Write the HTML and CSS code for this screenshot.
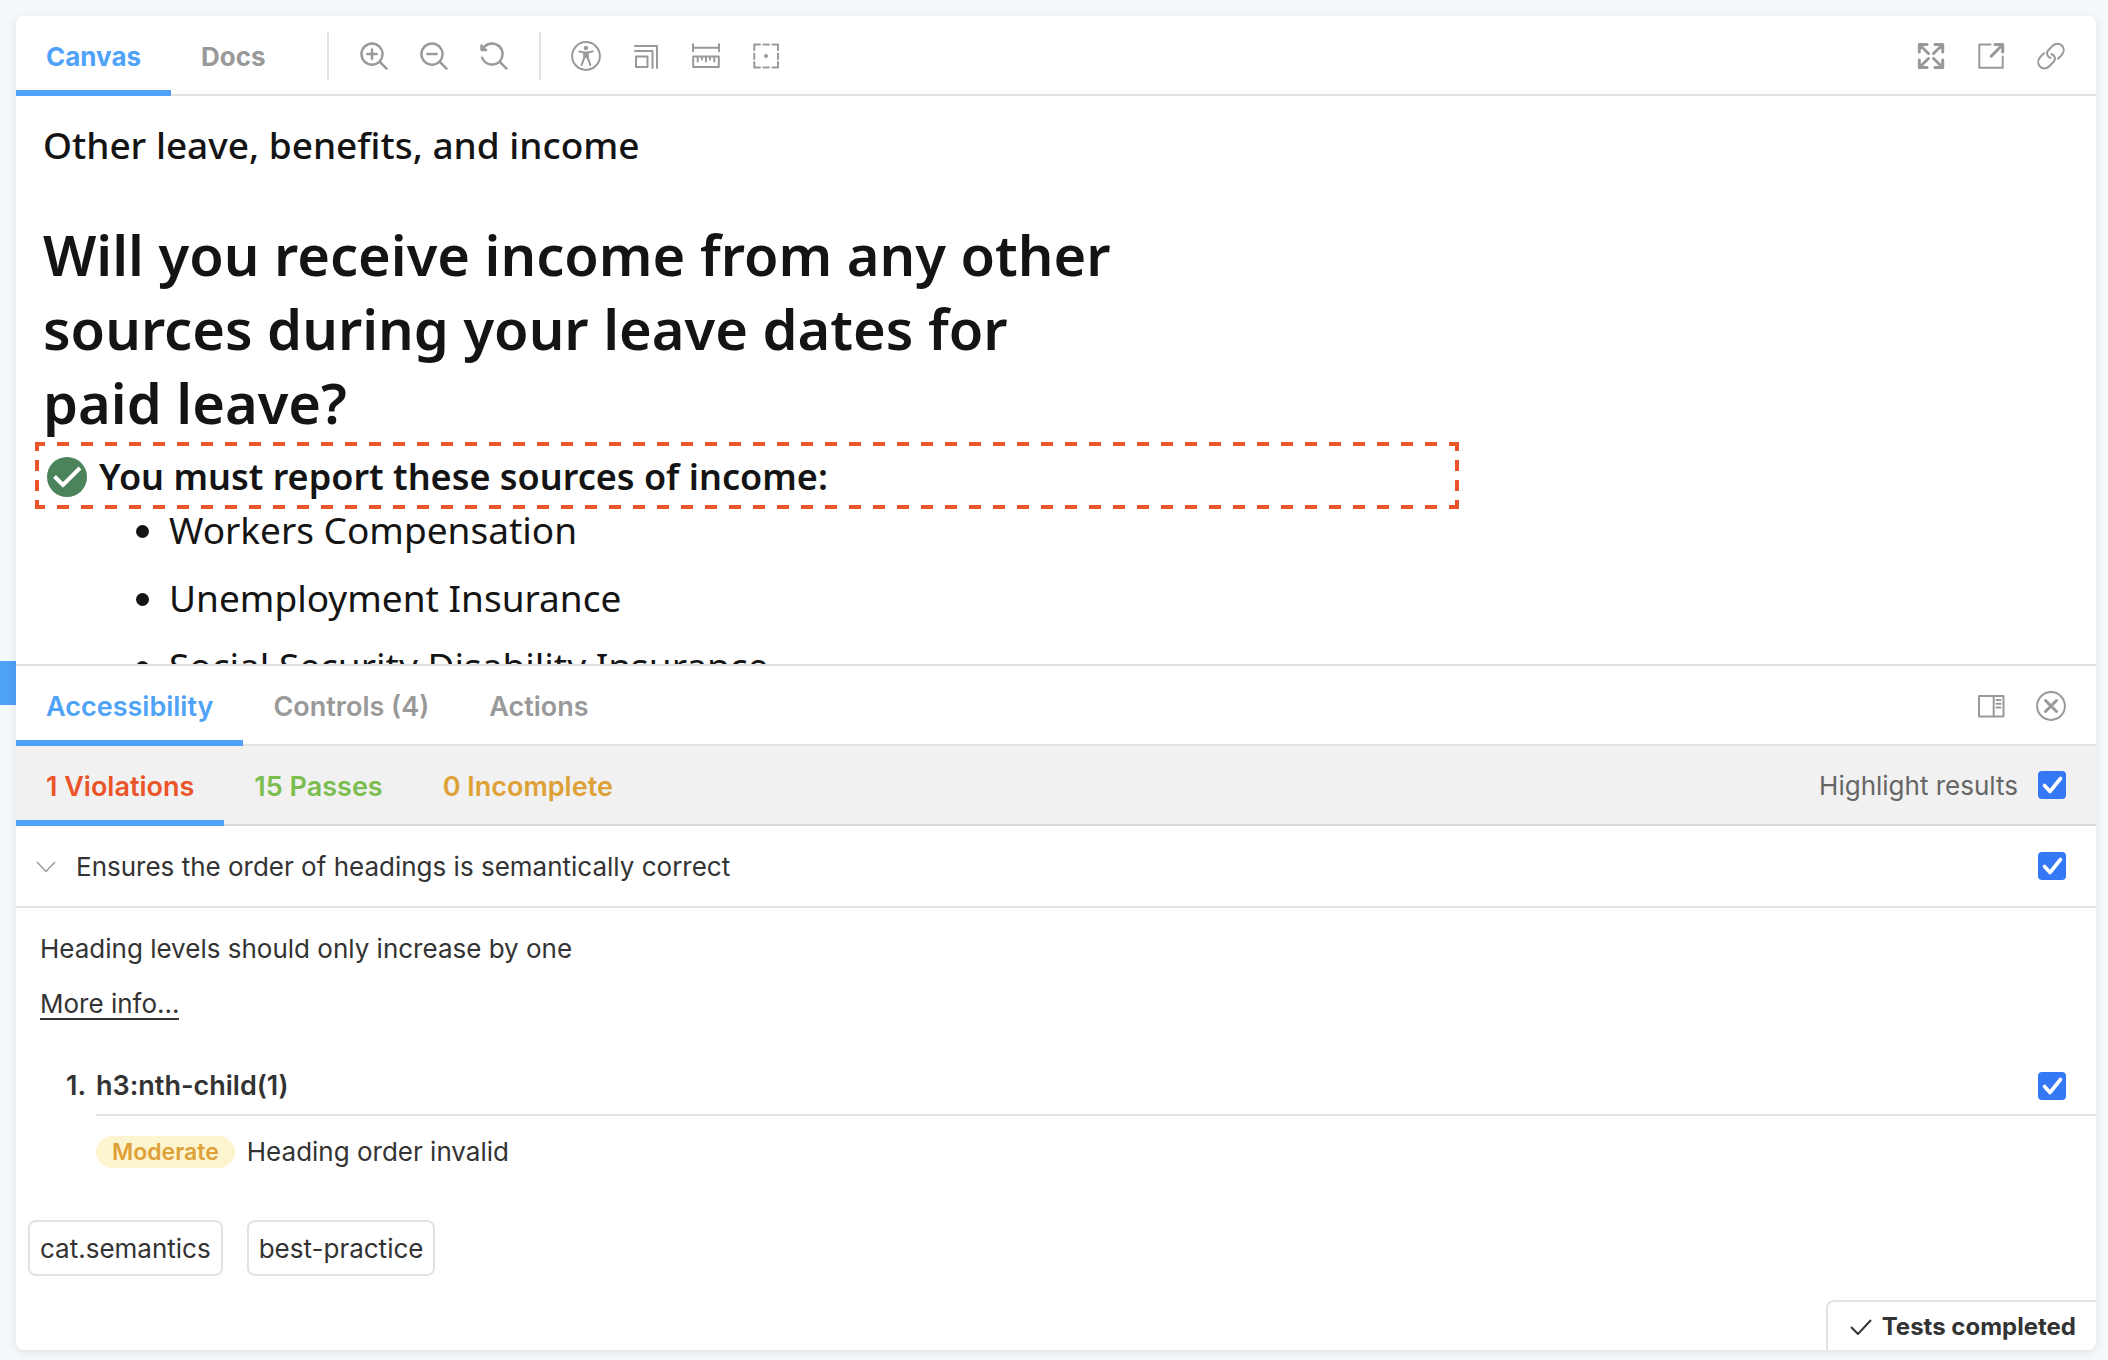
FILE: index.html
```html
<!DOCTYPE html>
<html lang="en">
<head>
<meta charset="utf-8">
<meta name="viewport" content="width=device-width, initial-scale=1">
<title>Storybook</title>
<link rel="stylesheet" href="styles.css">
</head>
<body>
<aside class="sidebar"><div class="sidebar-selected"></div></aside>
<main class="card">
  <header class="bar">
    <nav class="tabs">
      <button class="tab tab-active" type="button">Canvas</button>
      <button class="tab" type="button">Docs</button>
    </nav>
    <div class="tools tools-split">
      <button class="tool" type="button" aria-label="Zoom in"><svg viewBox="0 0 1024 1024"><path d="M220 670a316 316 0 010-450 316 316 0 01450 0 316 316 0 010 450 316 316 0 01-450 0zm749 240L757 698a402 402 0 10-59 60l212 212a42 42 0 0059-60z"/><path d="M487 604a42 42 0 01-84 0V487H286a42 42 0 110-84h117V286a42 42 0 1184 0v117h117a42 42 0 010 84H487v117z"/></svg></button>
      <button class="tool" type="button" aria-label="Zoom out"><svg viewBox="0 0 1024 1024"><path d="M220 670a316 316 0 010-450 316 316 0 01450 0 316 316 0 010 450 316 316 0 01-450 0zm749 240L757 698a402 402 0 10-59 60l212 212a42 42 0 0059-60z"/><path d="M604 403H286a42 42 0 100 84h318a42 42 0 100-84z"/></svg></button>
      <button class="tool" type="button" aria-label="Reset zoom"><svg viewBox="0 0 1024 1024"><path d="M148 560a318 318 0 00522 110 316 316 0 000-450 316 316 0 00-450 0c-11 11-21 22-30 34v4h47c25 0 46 21 46 46s-21 45-46 45H90c-13 0-25-6-33-14-9-9-14-20-14-33V156c0-25 20-45 45-45s45 20 45 45v32l1 1a401 401 0 01623 509l212 212a42 42 0 01-59 59L698 757A401 401 0 0165 570a42 42 0 0183-10z"/></svg></button>
    </div>
    <div class="tools tools-split">
      <button class="tool" type="button" aria-label="Vision simulator"><svg viewBox="0 0 30 30"><circle class="line" cx="15" cy="15" r="13.9"/><circle cx="15" cy="7" r="2.2"/><path class="line" d="M8.3 10.4c2 .8 4.200 1.200 6.700 1.200s4.700-.4 6.700-1.200M13.300 11.800v4.600l-2.600 7.600M16.700 11.800v4.600l2.600 7.600"/><path d="M12.600 11.500h4.800v4.700l-1 1.800L15 16.800 13.600 18l-1-1.800z"/></svg></button>
      <button class="tool" type="button" aria-label="Viewport"><svg viewBox="0 0 30 30"><path class="line" d="M5 15.500h11.500V26H5zM4 10h17.500v17M4 5h22v22"/></svg></button>
      <button class="tool" type="button" aria-label="Measure"><svg viewBox="0 0 30 30"><path class="line" d="M2 3.300v7M28 3.300v7M2 6.800h26M2.200 15.500h25.600v10.500H2.200zM6.700 15.500v5M11 15.500v3M15 15.500v5M19 15.500v3M23.300 15.500v5"/></svg></button>
      <button class="tool" type="button" aria-label="Outline"><svg viewBox="0 0 30 30"><path class="line" d="M3.300 9V3.500H9M12.500 3.500h5.500M21.500 3.500H27V9M27 12.500v5.500M27 21v5.500h-5.500M18 26.500h-5.500M9 26.500H3.300V21M3.300 18v-5.500"/><circle cx="15" cy="15" r="2.100"/></svg></button>
    </div>
    <div class="tools tools-end">
      <button class="tool" type="button" aria-label="Full screen"><svg viewBox="0 0 30 30"><path class="line bold" d="M3.300 11V3.500H11M3.500 3.700l9 8.800M19 3.500h7.700V11M26.500 3.700l-9 8.800M26.700 19v7.500H19M26.500 26.300l-9-8.800M11 26.500H3.300V19M3.500 26.300l9-8.800"/></svg></button>
      <button class="tool" type="button" aria-label="Open in new tab"><svg viewBox="0 0 30 30"><path class="line" d="M14.500 3.500H3.300v23.200h23.400V15.500"/><path class="line bold" d="M19 3.500h7.700V11M26.500 3.700L15.200 15.200"/></svg></button>
      <button class="tool" type="button" aria-label="Copy link"><svg viewBox="0 0 30 30"><path class="line" d="M8 12.300L4.500 15.800C1.500 19 1.700 23 4 25.500c2.500 2.500 6.500 2.500 9 0l4.500-4.500c2.500-2.500 2-6-2-8M22 17.700l3.500-3.500c3-3.200 2.800-7.200.5-9.700-2.500-2.500-6.500-2.500-9 0L12.500 9c-2.500 2.500-2 6 2 8"/></svg></button>
    </div>
  </header>

  <section class="canvas">
    <p class="eyebrow">Other leave, benefits, and income</p>
    <h1 class="question">Will you receive income from any other sources during your leave dates for paid leave?</h1>
    <h3 class="report"><svg class="report-icon" viewBox="0 0 40 40"><circle cx="20" cy="20" r="20"/><path d="M7.500 19.500l8.500 8.500L33 11"/></svg>You must report these sources of income:</h3>
    <ul class="sources">
      <li>Workers Compensation</li>
      <li>Unemployment Insurance</li>
      <li>Social Security Disability Insurance</li>
    </ul>
  </section>

  <section class="panel">
    <div class="bar">
      <nav class="tabs tabs-panel">
        <button class="tab tab-active" type="button">Accessibility</button>
        <button class="tab" type="button">Controls (4)</button>
        <button class="tab" type="button">Actions</button>
      </nav>
      <div class="tools tools-end">
        <button class="tool" type="button" aria-label="Change addon orientation"><svg viewBox="0 0 30 30"><path class="line" d="M3 5h24.500v20.500H3zM17.700 5v20.500M20.500 9h4M20.500 12.700h4M20.500 16.500h4"/></svg></button>
        <button class="tool" type="button" aria-label="Hide addons"><svg viewBox="0 0 30 30"><circle class="line" cx="15" cy="15" r="13.900"/><path class="line bold" d="M9.500 9.500l11 11M20.500 9.500l-11 11"/></svg></button>
      </div>
    </div>
    <div class="bar bar-results">
      <nav class="tabs tabs-panel">
        <button class="tab tab-active violations" type="button">1 Violations</button>
        <button class="tab passes" type="button">15 Passes</button>
        <button class="tab incomplete" type="button">0 Incomplete</button>
      </nav>
      <label class="highlight"><span class="highlight-text">Highlight results</span><input class="check" type="checkbox" checked></label>
    </div>
    <div class="rule">
      <button class="rule-toggle" type="button" aria-expanded="true"><svg class="chevron" viewBox="0 0 20 12"><path d="M1 1l9 9.500L19 1"/></svg>Ensures the order of headings is semantically correct</button>
      <input class="check" type="checkbox" aria-label="Highlight this rule" checked>
    </div>
    <div class="details">
      <p class="help">Heading levels should only increase by one</p>
      <a class="more" href="#more">More info...</a>
    </div>
    <ol class="elements">
      <li class="element">
        <div class="element-head">
          <span class="element-number">1.</span>
          <label class="element-name" for="element-1">h3:nth-child(1)</label>
          <input class="check" id="element-1" type="checkbox" checked>
        </div>
        <div class="element-check"><span class="badge">Moderate</span>Heading order invalid</div>
      </li>
    </ol>
    <div class="tags">
      <span class="tag">cat.semantics</span>
      <span class="tag">best-practice</span>
    </div>
    <footer class="status-row">
      <button class="status" type="button"><svg class="status-icon" viewBox="0 0 22 16"><path d="M1 8l7 7L21 1"/></svg>Tests completed</button>
    </footer>
  </section>
</main>
</body>
</html>
```
FILE: styles.css
```css
* {
  box-sizing: border-box;
}

body {
  display: flex;
  height: 100vh;
  margin: 0;
  overflow: hidden;
  background: #f6f9fc;
  color: #333;
  font: 26px/32px Inter, "Liberation Sans", sans-serif;
}

button {
  margin: 0;
  padding: 0;
  border: 0;
  background: none;
  color: inherit;
  font: inherit;
}

p, h1, h3, ul, ol {
  margin: 0;
  padding: 0;
}

.sidebar {
  flex: none;
  width: 16px;
  padding-top: 661px;
}

.sidebar-selected {
  height: 44px;
  background: #4ea2f8;
}

.card {
  display: flex;
  flex: 1;
  flex-direction: column;
  min-width: 0;
  margin: 16px 12px 10px 0;
  overflow: hidden;
  border-radius: 8px;
  background: #fff;
  box-shadow: 0 2px 10px rgba(0, 0, 0, 0.1);
}

/* Toolbars and tabs */

.bar {
  display: flex;
  flex: none;
  align-items: center;
  height: 80px;
  border-bottom: 2px solid #e3e3e3;
}

.bar-results {
  background: #f1f1f1;
  border-color: #d9d9d9;
}

.tabs {
  display: flex;
  align-self: stretch;
  margin-bottom: -2px;
}

.tab {
  padding: 0 30px;
  border-top: 8px solid transparent;
  border-bottom: 6px solid transparent;
  color: #999;
  font-weight: 700;
}

.tabs-panel .tab {
  font-size: 27px;
  font-weight: 600;
}

.tab.tab-active {
  border-bottom-color: #4ea2f8;
  color: #4ea2f8;
}

.tab.violations {
  color: #eb5428;
}

.tab.passes {
  color: #7bbd4f;
}

.tab.incomplete {
  color: #dea137;
}

.tools {
  display: flex;
  margin-bottom: -2px;
}

.tools-split {
  height: 48px;
  padding: 0 15px;
  border-left: 2px solid #e3e3e3;
}

.tabs + .tools-split {
  margin-left: 31px;
}

.tools-end {
  margin-left: auto;
  padding-right: 15px;
}

.tool {
  display: flex;
  align-items: center;
  justify-content: center;
  width: 60px;
  height: 48px;
}

.tool svg {
  width: 30px;
  height: 30px;
  fill: #999;
}

.tool .line {
  fill: none;
  stroke: #999;
  stroke-width: 2;
  stroke-linecap: round;
  stroke-linejoin: round;
}

.tool .bold {
  stroke-width: 3;
}

/* Story canvas */

.canvas {
  flex: 1 1 0;
  min-height: 0;
  padding: 25px 27px 0;
  overflow: hidden;
  color: #141414;
  font: 37px/48px "Noto Sans", sans-serif;
}

.eyebrow {
  font-weight: 500;
}

.question {
  max-width: 1084px;
  margin-top: 48px;
  font-size: 56px;
  font-weight: 600;
  line-height: 74px;
}

.report {
  position: relative;
  display: flex;
  align-items: center;
  max-width: 1408px;
  margin-top: 12px;
  padding-left: 4px;
  font-size: 36px;
  font-weight: 600;
  line-height: 51px;
}

.report::after {
  --mark: #eb5428;
  --across: linear-gradient(90deg, var(--mark) 10px, transparent 10px 22px, var(--mark) 22px);
  --down: linear-gradient(var(--mark) 9px, transparent 9px 18px, var(--mark) 18px);
  position: absolute;
  inset: -9px -8px -7px;
  background:
    var(--across) top left / 24px 4px repeat-x,
    var(--across) bottom left / 24px 4px repeat-x,
    var(--down) top left / 4px 20px repeat-y,
    var(--down) top right / 4px 20px repeat-y;
  content: "";
}

.report-icon {
  width: 40px;
  height: 40px;
  margin-right: 12px;
  fill: #4b835b;
}

.report-icon path {
  fill: none;
  stroke: #fff;
  stroke-width: 4;
}

.sources {
  margin-top: 4px;
  padding-left: 126px;
}

.sources li {
  margin-bottom: 20px;
}

/* Accessibility panel */

.panel {
  flex: none;
  border-top: 2px solid #dedfe1;
}

.check {
  flex: none;
  width: 28px;
  height: 28px;
  margin: 0;
  appearance: none;
  border-radius: 4px;
  background: #3478f6;
}

.check:checked {
  background: #3478f6 url("data:image/svg+xml,%3Csvg xmlns='http://www.w3.org/2000/svg' viewBox='0 0 28 28'%3E%3Cpath d='M6.500 14.500l5.500 6L22.500 7.500' fill='none' stroke='%23fff' stroke-width='3.600' stroke-linecap='round' stroke-linejoin='round'/%3E%3C/svg%3E") center / 28px 28px;
}

.highlight {
  display: flex;
  align-items: center;
  gap: 20px;
  margin-left: auto;
  padding-right: 30px;
  color: #666;
}

.highlight-text {
  padding-top: 2px;
}

.rule {
  display: flex;
  align-items: center;
  justify-content: space-between;
  height: 82px;
  padding: 0 30px 0 20px;
  border-bottom: 2px solid #e3e3e3;
}

.rule-toggle {
  display: flex;
  align-items: center;
  gap: 20px;
  padding-top: 2px;
}

.chevron {
  width: 20px;
  height: 12px;
  fill: none;
  stroke: #999;
  stroke-width: 1.500;
}

.details {
  display: flex;
  flex-direction: column;
  align-items: flex-start;
  gap: 25px;
  padding: 25px 24px 38px;
}

.more {
  border-bottom: 2px solid #333;
  color: #333;
  line-height: 28px;
  text-decoration: none;
}

.elements {
  padding-left: 80px;
  list-style: none;
}

.element-head {
  display: flex;
  align-items: center;
  height: 58px;
  padding-right: 30px;
  border-bottom: 2px solid #e3e3e3;
  font-size: 27px;
  font-weight: 600;
}

.element-number {
  width: 30px;
  margin-left: -30px;
}

.element-name {
  flex: 1;
}

.element-check {
  display: flex;
  align-items: center;
  gap: 12px;
  margin-top: 20px;
}

.badge {
  padding: 0 16px;
  border-radius: 16px;
  background: #fdf4d0;
  color: #dea137;
  font-size: 23px;
  font-weight: 600;
}

.tags {
  display: flex;
  gap: 24px;
  padding: 52px 12px 24px;
}

.tag {
  padding: 11px 10px 9px;
  border: 2px solid #e3e3e3;
  border-radius: 8px;
}

.status-row {
  display: flex;
  justify-content: flex-end;
}

.status {
  display: flex;
  align-items: center;
  gap: 10px;
  height: 50px;
  padding: 2px 20px 0 22px;
  border-top: 2px solid #e3e3e3;
  border-left: 2px solid #e3e3e3;
  border-top-left-radius: 8px;
  font-size: 24px;
  font-weight: 700;
}

.status-icon {
  width: 22px;
  height: 16px;
  fill: none;
  stroke: #333;
  stroke-width: 2;
}
```
